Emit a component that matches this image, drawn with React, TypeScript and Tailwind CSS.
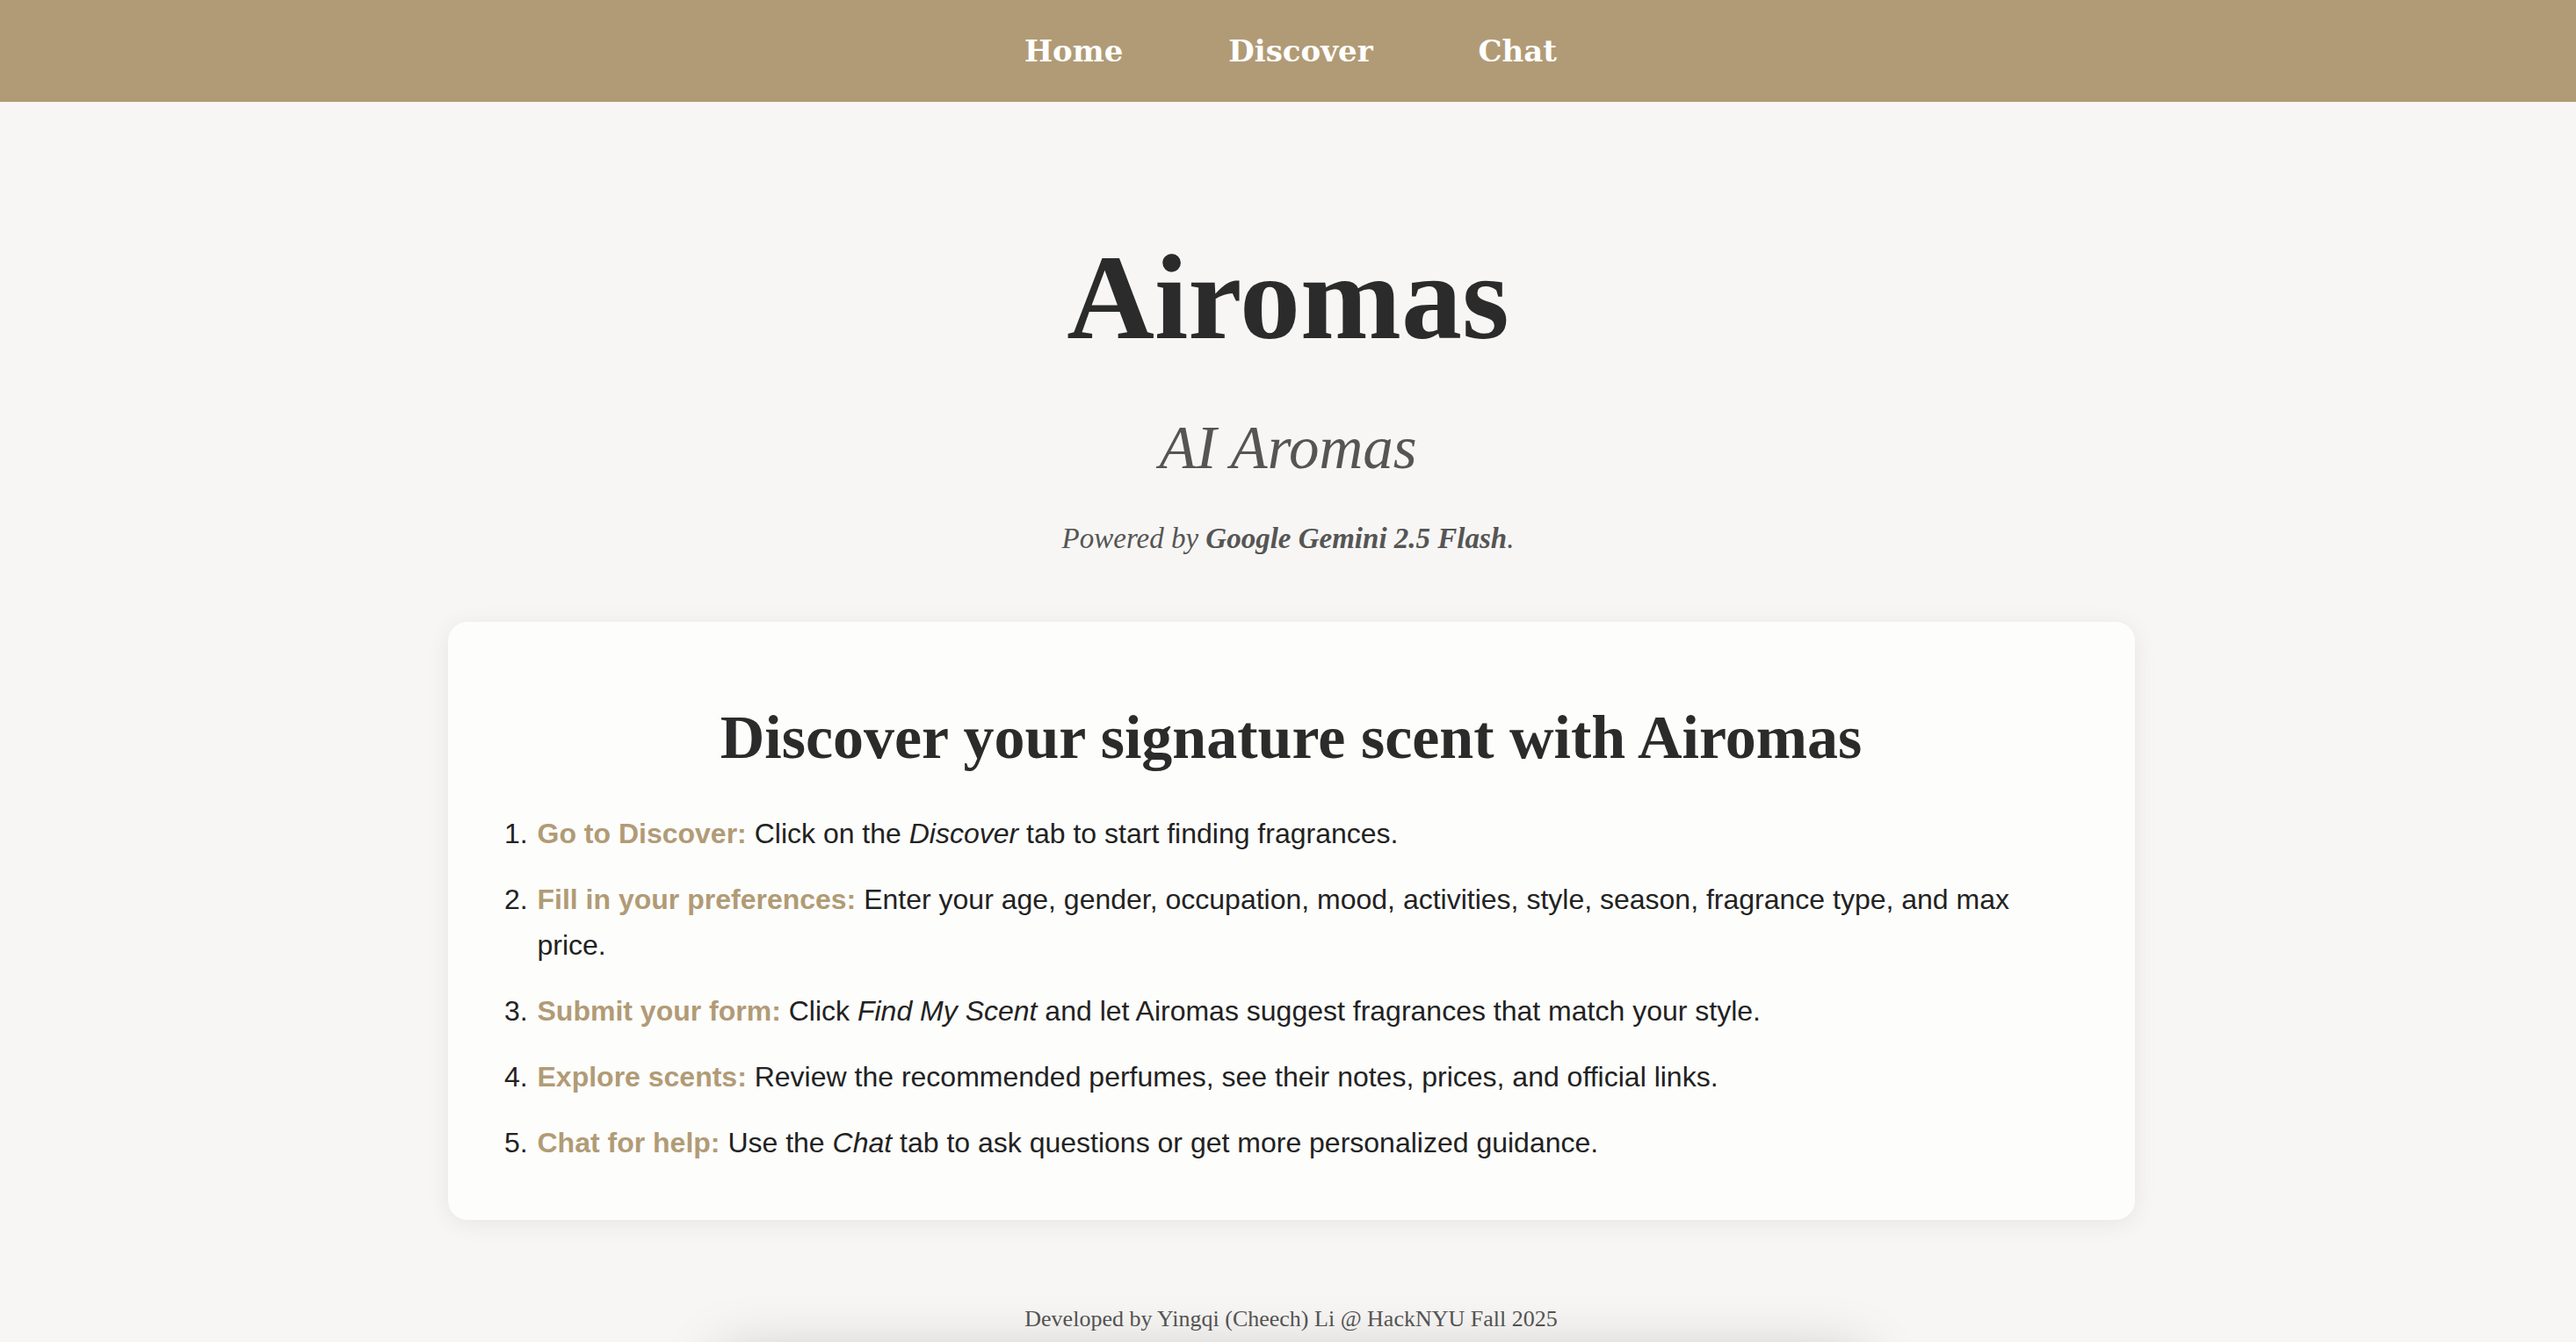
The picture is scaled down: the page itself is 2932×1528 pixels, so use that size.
import React from "react";

const steps = [
  {
    title: "Go to Discover:",
    body: (
      <>
        Click on the <em>Discover</em> tab to start finding fragrances.
      </>
    ),
  },
  {
    title: "Fill in your preferences:",
    body: (
      <>
        Enter your age, gender, occupation, mood, activities, style, season,
        fragrance type, and max price.
      </>
    ),
  },
  {
    title: "Submit your form:",
    body: (
      <>
        Click <em>Find My Scent</em> and let Airomas suggest fragrances that
        match your style.
      </>
    ),
  },
  {
    title: "Explore scents:",
    body: (
      <>
        Review the recommended perfumes, see their notes, prices, and official
        links.
      </>
    ),
  },
  {
    title: "Chat for help:",
    body: (
      <>
        Use the <em>Chat</em> tab to ask questions or get more personalized
        guidance.
      </>
    ),
  },
];

export default function App() {
  return (
    <div className="min-h-screen bg-[#f7f6f4] overflow-hidden">
      <nav className="h-[116px] bg-[#b19b76] flex items-center justify-center gap-[120px] pl-[6px]">
        {["Home", "Discover", "Chat"].map((item) => (
          <a
            key={item}
            href="#"
            className="text-white font-bold text-[34px] leading-none font-['DejaVu_Serif',serif]"
          >
            {item}
          </a>
        ))}
      </nav>

      <header className="flex flex-col items-center font-['Liberation_Serif',serif]">
        <h1 className="mt-[154px] text-[138px] leading-none font-bold text-[#2b2b2b]">
          Airomas
        </h1>
        <h2 className="mt-[68px] text-[69px] leading-none italic text-[#555]">
          AI Aromas
        </h2>
        <p className="mt-[52px] text-[33px] leading-none italic text-[#555]">
          Powered by <strong>Google Gemini 2.5 Flash</strong>.
        </p>
      </header>

      <div className="flex justify-center pl-[7px]">
        <main className="mt-[78px] w-[1920px] rounded-[22px] bg-[#fdfdfb] shadow-[0_4px_28px_rgba(0,0,0,0.07)] px-[60px] pt-[97px] pb-[62px]">
          <h3 className="text-center text-[70px] leading-none font-bold text-[#2b2b2b] font-['Liberation_Serif',serif]">
            Discover your signature scent with Airomas
          </h3>
          <ol className="mt-[48px] pl-[40px] list-decimal font-['Liberation_Sans',sans-serif] text-[32px] leading-[52px] text-[#222]">
            {steps.map((s) => (
              <li key={s.title} className="mb-[23px] last:mb-0 pl-[2px]">
                <strong className="text-[#b19b76]">{s.title}</strong> {s.body}
              </li>
            ))}
          </ol>
        </main>
      </div>

      <footer className="mt-[100px] flex flex-col items-center pl-[7px]">
        <p className="text-[26px] leading-none text-[#555] font-['Liberation_Serif',serif]">
          Developed by Yingqi (Cheech) Li @ HackNYU Fall 2025
        </p>
        <div className="mt-[30px] w-[1300px] h-[200px] bg-[#f7f6f4] shadow-[0_0_70px_rgba(0,0,0,0.22)]" />
      </footer>
    </div>
  );
}
